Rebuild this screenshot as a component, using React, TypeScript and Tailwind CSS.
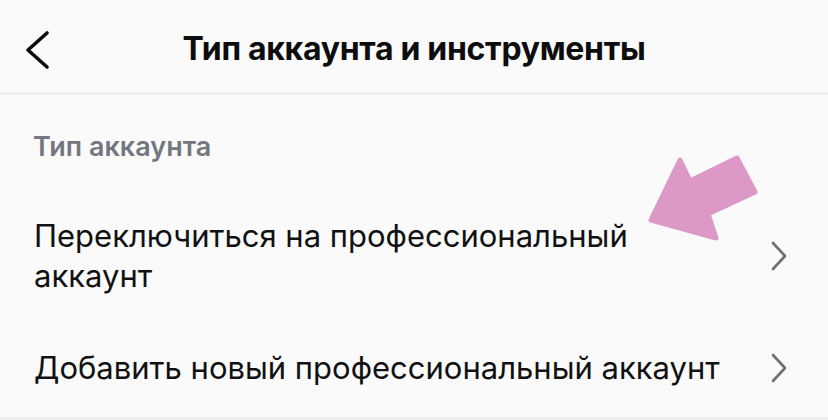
import React from 'react';

function Chevron() {
  return (
    <svg width="18" height="30" viewBox="0 0 18 30" fill="none" className="shrink-0">
      <path d="M3 2 L15 15 L3 28" stroke="#6e6f74" strokeWidth="2.6" strokeLinecap="round" strokeLinejoin="round" />
    </svg>
  );
}

function Row({ children, wide }: { children: React.ReactNode; wide?: boolean }) {
  return (
    <div className="flex items-center justify-between pl-[34px] pr-[40px]">
      <p className={`text-[31px] leading-[40px] text-[#111111] ${wide ? 'max-w-[700px]' : 'max-w-[630px]'}`}>
        {children}
      </p>
      <Chevron />
    </div>
  );
}

export default function App() {
  return (
    <div
      className="relative flex h-[420px] w-[828px] flex-col overflow-hidden bg-[#fafafa]"
      style={{ fontFamily: 'Inter, Roboto, "Noto Sans", sans-serif' }}
    >
      <header className="relative flex h-[94px] shrink-0 items-center justify-center border-b border-[#e3e3e3]">
        <button className="absolute left-[24px] top-[30px]">
          <svg width="28" height="40" viewBox="0 0 28 40" fill="none">
            <path d="M23 3 L4 20 L23 37" stroke="#0d0d0d" strokeWidth="3.6" strokeLinecap="round" strokeLinejoin="round" />
          </svg>
        </button>
        <h1 className="pt-[4px] text-[32px] font-bold tracking-[-0.3px] text-[#0d0d0d]">Тип аккаунта и инструменты</h1>
      </header>

      <div className="flex flex-1 flex-col">
        <p className="pl-[33px] pt-[37px] text-[27px] font-semibold leading-[32px] text-[#74777f]">Тип аккаунта</p>
        <div className="mt-[53px]">
          <Row>Переключиться на профессиональный аккаунт</Row>
        </div>
        <div className="mt-[52px]">
          <Row wide>Добавить новый профессиональный аккаунт</Row>
        </div>
      </div>
      <div className="h-[3px] shrink-0 bg-[#efefef]" />

      <svg className="absolute left-0 top-0" width="828" height="420" viewBox="0 0 828 420">
        <polygon
          points="651,220 680,160 690,181 737,158 755,192 708,214 716,238"
          fill="#dc99c6"
          stroke="#dc99c6"
          strokeWidth="5"
          strokeLinejoin="round"
        />
      </svg>
    </div>
  );
}
